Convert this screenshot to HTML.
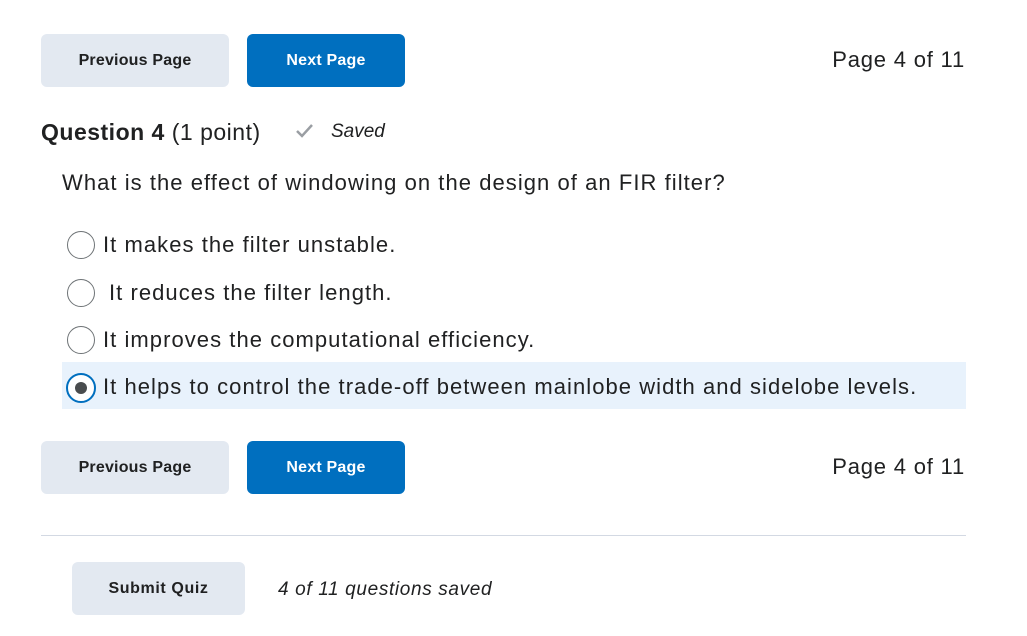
<!DOCTYPE html>
<html><head><meta charset="utf-8"><style>
body{margin:0;width:1027px;height:636px;background:#fff;font-family:"Liberation Sans",sans-serif;color:#202122;position:relative;overflow:hidden}
.a{position:absolute;white-space:nowrap}
.btn{position:absolute;border-radius:6px;font-weight:bold;font-size:16px;display:flex;align-items:center;justify-content:center;letter-spacing:0.2px}
.g{background:#e3e9f1;color:#202122}
.b{background:#006fbf;color:#fff}
.r{position:absolute;width:28px;height:28px;border:1px solid #6e7376;border-radius:50%;background:#fff;box-sizing:border-box}
.opt{position:absolute;font-size:22px;left:103px;white-space:nowrap;letter-spacing:1.05px}
</style></head><body>
<div class="btn g" style="left:41px;top:34px;width:188px;height:53px">Previous Page</div>
<div class="btn b" style="left:247px;top:34px;width:158px;height:53px">Next Page</div>
<div class="a" style="left:820px;top:47px;font-size:22px;width:145px;text-align:right;letter-spacing:0.8px">Page 4 of 11</div>

<div class="a" style="left:41px;top:119px;font-size:23px;letter-spacing:0.5px"><b>Question 4</b> (1 point)</div>
<svg class="a" style="left:294px;top:122px" width="22" height="18" viewBox="0 0 22 18"><path d="M3 9l5 5L18 3" fill="none" stroke="#9a9ea3" stroke-width="2.5"/></svg>
<div class="a" style="left:331px;top:121px;font-size:19px;font-style:italic">Saved</div>

<div class="a" style="left:62px;top:170px;font-size:22px;letter-spacing:1.05px">What is the effect of windowing on the design of an FIR filter?</div>

<div class="a" style="left:62px;top:362px;width:904px;height:47px;background:#e8f2fc"></div>
<div class="r" style="left:67px;top:231px"></div>
<div class="opt" style="top:232px">It makes the filter unstable.</div>
<div class="r" style="left:67px;top:279px"></div>
<div class="opt" style="top:280px;left:109px">It reduces the filter length.</div>
<div class="r" style="left:67px;top:326px"></div>
<div class="opt" style="top:327px">It improves the computational efficiency.</div>
<div class="r" style="left:66px;top:373px;width:30px;height:30px;border:2px solid #006fbf"><div style="position:absolute;left:7px;top:7px;width:12px;height:12px;border-radius:50%;background:#494c4e"></div></div>
<div class="opt" style="top:374px">It helps to control the trade-off between mainlobe width and sidelobe levels.</div>

<div class="btn g" style="left:41px;top:441px;width:188px;height:53px">Previous Page</div>
<div class="btn b" style="left:247px;top:441px;width:158px;height:53px">Next Page</div>
<div class="a" style="left:820px;top:454px;font-size:22px;width:145px;text-align:right;letter-spacing:0.8px">Page 4 of 11</div>

<div class="a" style="left:41px;top:535px;width:925px;height:1px;background:#d3d9e3"></div>
<div class="btn g" style="left:72px;top:562px;width:173px;height:53px;letter-spacing:0.6px">Submit Quiz</div>
<div class="a" style="left:278px;top:579px;font-size:19px;font-style:italic;letter-spacing:0.65px">4 of 11 questions saved</div>
</body></html>
